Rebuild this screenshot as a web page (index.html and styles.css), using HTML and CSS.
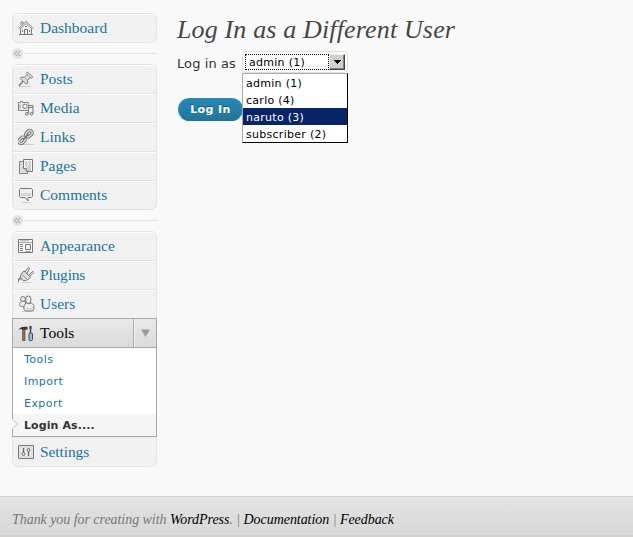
FILE: index.html
```html
<!DOCTYPE html>
<html lang="en">
<head>
<meta charset="utf-8">
<title>Log In as a Different User</title>
<link rel="stylesheet" href="styles.css">
</head>
<body>
<div class="page">
<div class="columns">
<nav class="sidebar">
<div class="group">
<a class="item"><svg class="icon" viewBox="0 0 16 16"><path d="M2.500 8v6.500h11V8M.7 8.500 8 1.300l7.300 7.200M3 5V2h2v2" fill="#eee" stroke="#858585"/><path d="m2.500 8.500 5.500-5 5.500 5" fill="none" stroke="#999"/><path d="M6.500 14V9.500h3V14M7 6.500h2M4.500 10v2M11.500 10v2M1 14.500h14" fill="none" stroke="#777"/></svg><span class="w-dashboard">Dashboard</span></a>
</div>
<div class="divider"><span class="knob"><svg viewBox="0 0 11 11"><path d="M5 3 2.700 5.500 5 8M8 3 5.700 5.500 8 8" fill="none" stroke="#999"/></svg></span></div>
<div class="group">
<a class="item"><svg class="icon" viewBox="0 0 16 16"><path d="M1 15.500h12" stroke="#ccc"/><path d="m.8 15 5-5.500" stroke="#777" stroke-width="1.300"/><path d="m9.500 1 5.300 5-1.500 1.300-1.300-.5-2.600 2.700.4 2.500-1.600 1L2.300 7.500 3.500 6l2.800.4L9 3.500l-.7-1.200z" fill="#ddd" stroke="#808080"/><path d="m6.500 6.200 3.200 3.200M9 3.500 12 6.700" stroke="#999"/></svg><span class="w-posts">Posts</span></a>
<a class="item"><svg class="icon" viewBox="0 0 16 16"><path d="M.5 2.500h2v-1h2v1h6v8H.5z" fill="#eee" stroke="#858585"/><circle cx="7" cy="6.300" r="2.200" fill="#fff" stroke="#777"/><path d="M2 4.500v4M10.500 3v4" stroke="#999"/><path d="M10.500 13V7.500h4.500V13M10.500 5.500H15v2" fill="none" stroke="#777"/><circle cx="8.800" cy="13.800" r="1.400" fill="#ddd" stroke="#777"/><circle cx="13.500" cy="13.800" r="1.400" fill="#ddd" stroke="#777"/></svg><span class="w-media">Media</span></a>
<a class="item"><svg class="icon" viewBox="0 0 16 16"><path d="M4 15.500h12" stroke="#ccc"/><g fill="none" stroke="#777" stroke-width="3.400"><rect x="7.500" y="2.300" width="7" height="4.600" rx="2.300" transform="rotate(-45 11 4.600)"/><rect x=".5" y="9.100" width="7" height="4.600" rx="2.300" transform="rotate(-45 4 11.400)"/></g><g fill="none" stroke="#ddd" stroke-width="1.400"><rect x="7.500" y="2.300" width="7" height="4.600" rx="2.300" transform="rotate(-45 11 4.600)"/><rect x=".5" y="9.100" width="7" height="4.600" rx="2.300" transform="rotate(-45 4 11.400)"/></g><path d="m5 11 5.500-6" stroke="#777" stroke-width="1.300"/></svg><span class="w-links">Links</span></a>
<a class="item"><svg class="icon" viewBox="0 0 16 16"><path d="M1.500 3.500h8v12h-8z" fill="#ddd" stroke="#858585"/><path d="M5.500 1.500h9v12h-6l-3-3z" fill="#f7f7f7" stroke="#777"/><path d="M7 4h2m1 0h3M7 6h3m1 0h2M7 8h2m1 0h3M8 10h5M9 12h4" stroke="#aaa"/><path d="M5.500 10.500h3v3" fill="#ddd" stroke="#888"/></svg><span class="w-pages">Pages</span></a>
<a class="item"><svg class="icon" viewBox="0 0 16 16"><path d="M4 15.500h8" stroke="#ccc"/><path d="M2.500 1.500h11l1 1v7l-1 1H10v3.500l-3-3.500H2.500l-1-1v-7z" fill="#eee" stroke="#777"/><path d="M3 6h10v3H3z" fill="#d4d4d4"/></svg><span class="w-comments">Comments</span></a>
</div>
<div class="divider"><span class="knob"><svg viewBox="0 0 11 11"><path d="M5 3 2.700 5.500 5 8M8 3 5.700 5.500 8 8" fill="none" stroke="#999"/></svg></span></div>
<div class="group">
<a class="item"><svg class="icon" viewBox="0 0 16 16"><path d="M.5 1.500h14v13H.5z" fill="#f8f8f8" stroke="#777"/><path d="M1 4.500h13M2 2.800h9" stroke="#aaa"/><path d="M2 6.500h3m-3 2h3m-3 2h3m-3 2h3" stroke="#777"/><path d="M7.500 6.500h5v5h-5z" fill="#eee" stroke="#777"/><path d="M7 13.500h6" stroke="#aaa"/></svg><span class="w-appearance">Appearance</span></a>
<a class="item"><svg class="icon" viewBox="0 0 16 16"><path d="M4 15.500h9" stroke="#ccc"/><path d="M0 15.500c0-2.500 1-4 3-4" fill="none" stroke="#777" stroke-width="1.500"/><path d="m6 4 6.500 6.500C9 14 5 14.500 3.500 12 1.500 9.500 3 6.500 6 4Z" fill="#ddd" stroke="#777"/><path d="m7 5 3.500-4.500 1 1-2.500 5M10.500 8.500l4.200-4.200 1 1-4.200 4.600" fill="#eee" stroke="#777"/><path d="m4 7.500 5 5M7.500 5l4.500 4.500" stroke="#999"/></svg><span class="w-plugins">Plugins</span></a>
<a class="item"><svg class="icon users" viewBox="0 0 17 17"><path d="M4 16.500h12" stroke="#ccc"/><g fill="#eee" stroke="#777"><circle cx="5" cy="4" r="2.400"/><path d="M7.500 7c-3-1.500-6-.5-6 2.500 0 2 3 2.500 6 1.500z"/><rect x="7.800" y="1" width="5" height="7.500" rx="2.500"/><path d="M8.500 8c-3 1.500-3.500 6.500-1.500 7.500s7 .8 8.500-.5c1.500-2.500 0-6.500-2.500-7.200-.5 1.200-3.500 1.200-4.500.2z"/></g><path d="M8 12.500c2 2 5 2 7 0" stroke="#bbb" fill="none"/></svg><span class="w-users">Users</span></a>
<div class="current"><a class="current-link"><svg class="icon" viewBox="0 0 16 16"><path d="M4.500 4v11.500h2.500V4z" fill="#9a6a4d" stroke="#5c4436" stroke-width=".6"/><path d="M.5 5C2 2 4 1.500 9.500 1.700v3H4C3 3.500 2 4 .5 5Z" fill="#383838"/><path d="M12.500 1v7" stroke="#444" stroke-width="1.500"/><path d="M11.500 1h2v3h-2z" fill="#444"/><rect x="11" y="8" width="3.500" height="7.500" rx="1" fill="#9bb8d8" stroke="#35506e"/></svg><span class="w-tools">Tools</span></a><span class="toggle"><svg viewBox="0 0 10 9"><path d="M0 .5h10L5 9z" fill="#999"/></svg></span></div>
<div class="submenu"><a><span class="s-tools">Tools</span></a><a><span class="s-import">Import</span></a><a><span class="s-export">Export</span></a><a class="selected"><svg class="notch" viewBox="0 0 7 10"><path d="M0 0h1l5 5-5 5H0z" fill="#f9f9f9"/><path d="m1 1 5 4-5 4" fill="none" stroke="#bbb"/></svg><span class="s-login">Login As....</span></a></div>
<a class="item last"><svg class="icon" viewBox="0 0 16 16"><path d="M.5 1.500h15v13H.5z" fill="#e2e2e2" stroke="#777"/><path d="M2.500 3.500h11v9h-11z" fill="#f4f4f4" stroke="#ddd"/><path d="M5.500 4v5M10.500 7v5" stroke="#666" stroke-width="1.500"/><circle cx="5.500" cy="10" r="1.500" fill="#eee" stroke="#666"/><circle cx="10.500" cy="6" r="1.500" fill="#eee" stroke="#666"/></svg><span class="w-settings">Settings</span></a>
</div>
</nav>
<main class="content">
<h1><span>Log In as a Different User</span></h1>
<div class="field"><span class="label">Log in as</span>
<div class="select"><span class="value">admin (1)</span><span class="arrow"><svg viewBox="0 0 7 4" shape-rendering="crispEdges"><path d="M0 0h7L3.500 4z"/></svg></span>
<div class="options"><div><span class="o-admin">admin (1)</span></div><div><span class="o-carlo">carlo (4)</span></div><div class="active"><span class="o-naruto">naruto (3)</span></div><div><span class="o-subscriber">subscriber (2)</span></div></div>
</div></div>
<button class="submit">Log In</button>
</main>
</div>
<footer><p><span class="thanks">Thank you for creating with</span> <a class="f-wp">WordPress</a>. | <a class="f-doc">Documentation</a> | <a class="f-feed">Feedback</a></p></footer>
</div>
</body>
</html>
```
FILE: styles.css
```css
* { box-sizing: border-box; }
body { margin: 0; background: #f9f9f9; font: 11px "DejaVu Sans", sans-serif; color: #333; }
.page { display: flex; flex-direction: column; height: 537px; overflow: hidden; }
.columns { display: flex; flex: 1; gap: 20px; padding: 13px 12px 0; }
.sidebar { width: 145px; flex: none; }
.group { border: 1px solid #e3e3e3; border-radius: 6px; background: #f1f1f1; }
.item { display: flex; align-items: center; height: 29px; padding: 0 0 2px 5px; border-top: 1px solid #fff; border-bottom: 1px solid #e3e3e3; color: #21759b; font: 15.5px "Liberation Serif", serif; white-space: nowrap; }
.item:first-child { border-radius: 5px 5px 0 0; }
.item:last-child { height: 28px; border-bottom: 0; }
.item.last { height: 29px; padding-bottom: 0; border-top-color: #eee; border-radius: 0 0 5px 5px; }
.icon { width: 16px; height: 16px; margin-right: 6px; flex: none; }
.users { width: 17px; height: 17px; margin-right: 5px; }
.w-appearance { letter-spacing: .1px; }
.w-plugins { letter-spacing: -.2px; }
.w-settings { letter-spacing: -.1px; }
.divider { height: 21px; display: flex; align-items: center; }
.divider::after { content: ""; flex: 1; height: 1px; background: #e3e3e3; }
.knob { width: 11px; height: 11px; border-radius: 50%; background: #e3e3e3; }
.knob svg { display: block; width: 11px; height: 11px; }
.current { display: flex; height: 30px; margin: -1px -1px 0; border: 1px solid #aaa; background: linear-gradient(#e9e9e9, #dadada); color: #000; font: 15.5px "Liberation Serif", serif; }
.current-link { display: flex; align-items: center; flex: 1; padding-left: 5px; }
.toggle { width: 23px; display: flex; align-items: center; justify-content: center; border-left: 1px solid #aaa; box-shadow: inset 1px 0 #f5f5f5; }
.toggle svg { width: 9px; height: 8px; }
.submenu { margin: 0 -1px; border: 1px solid #aaa; border-top: 0; background: #fff; }
.submenu a { position: relative; display: flex; align-items: center; height: 22px; padding-left: 11px; color: #21759b; letter-spacing: .45px; white-space: nowrap; }
.submenu .selected { background: #f5f5f5; color: #333; font-weight: bold; letter-spacing: .1px; }
.notch { position: absolute; left: -1px; top: 5px; width: 7px; height: 10px; }
.content { flex: 1; }
h1 { margin: 0 0 4px; height: 34px; font: italic 26px/34px "Liberation Serif", serif; color: #464646; letter-spacing: .15px; white-space: nowrap; }
.field { display: flex; align-items: center; height: 22px; }
.label { width: 65px; padding-top: 2px; font-size: 13px; letter-spacing: .1px; white-space: nowrap; }
.select { position: relative; display: flex; width: 106px; height: 22px; padding: 2px; border: 1px solid #dfdfdf; border-radius: 4px; background: #fff; color: #000; letter-spacing: .28px; }
.value { flex: 1; border: 1px dotted #000; line-height: 15px; padding-left: 3px; white-space: nowrap; }
.arrow { width: 16px; display: flex; align-items: center; justify-content: center; background: #d4d0c8; border: 1px solid; border-color: #eee #404040 #404040 #eee; box-shadow: inset -1px -1px #808080; }
.arrow svg { width: 7px; height: 4px; }
.options { position: absolute; z-index: 1; left: -1px; top: 21px; width: 106px; height: 70px; border: 1px solid #000; border-color: #aaa #000 #000 #aaa; background: #fff; }
.options div { height: 17px; line-height: 20px; padding-left: 3px; white-space: nowrap; }
.options .active { background: #0a246a; color: #fff; }
.submit { display: block; width: 65px; height: 23px; margin: 25px 0 0 1px; padding: 0; border: 1px solid #298cba; border-bottom-color: #21759b; border-radius: 12px; background: linear-gradient(#2787b3, #23759a); color: #fff; font: bold 11px "DejaVu Sans", sans-serif; letter-spacing: .4px; text-shadow: 0 -1px rgba(0,0,0,.3); }
footer { height: 41px; border-top: 1px solid #d1d1d1; border-bottom: 2px solid #d4d0c8; background: linear-gradient(#e3e3e3, #d8d8d8); }
footer p { margin: 15px 12px 0; font: italic 14px/16px "Liberation Serif", serif; letter-spacing: -.05px; color: #777; white-space: nowrap; }
footer a { color: #000; }
```
